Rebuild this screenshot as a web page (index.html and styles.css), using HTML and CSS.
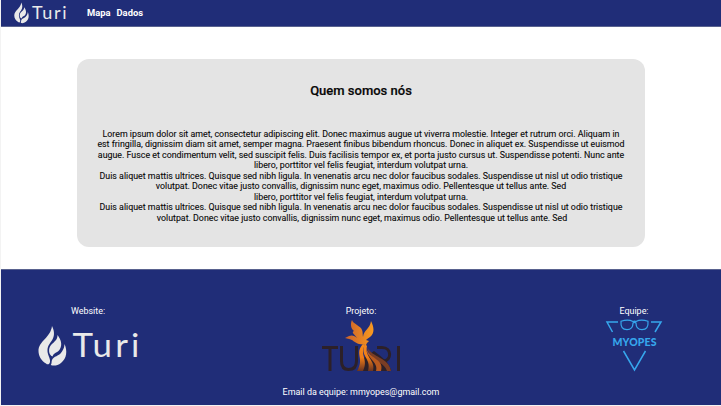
FILE: index.html
```html
<!DOCTYPE html>
<html lang="pt-BR">
<head>
<meta charset="utf-8">
<title>Turi</title>
<link rel="stylesheet" href="styles.css">
</head>
<body>
<svg width="0" height="0" class="defs">
  <symbol id="turi" viewBox="0 0 104 42">
    <g fill="#e9e9e9">
      <path d="M14 1C17 7 16.500 12 13.500 16C10.500 20 8.500 23 10 29C10.700 32 12.500 34 12 37C11.500 39.500 9.500 40 8 38.500C3.500 36 .5 31 .5 26C.5 16 12.500 13 14 1Z"/>
      <path d="M19.500 10C23 15 24.500 19 22 24C20 28 16 27 14.500 31.500C10.500 30 10 23.500 13 20C16.500 16.500 19.500 15 19.500 10Z"/>
      <path d="M26.500 19C29.500 26 29 33 23 38C19.500 40.800 15.500 41 12.800 40C14 38 13.300 37 14 35C15.500 31 21 31.500 24 26.500C25.500 24 26.500 22 26.500 19Z"/>
    </g>
    <text x="34.500" y="32" textLength="70" lengthAdjust="spacingAndGlyphs" class="turi-text">Turi</text>
  </symbol>
</svg>
<div class="page">
  <header class="navbar">
    <svg class="logo-small" viewBox="0 0 104 42"><use href="#turi"/></svg>
    <nav><a>Mapa</a><a>Dados</a></nav>
  </header>
  <main>
    <section class="card">
      <h1>Quem somos nós</h1>
      <p>Lorem ipsum dolor sit amet, consectetur adipiscing elit. Donec maximus augue ut viverra molestie. Integer et rutrum orci. Aliquam in<br>est fringilla, dignissim diam sit amet, semper magna. Praesent finibus bibendum rhoncus. Donec in aliquet ex. Suspendisse ut euismod<br>augue. Fusce et condimentum velit, sed suscipit felis. Duis facilisis tempor ex, et porta justo cursus ut. Suspendisse potenti. Nunc ante<br>libero, porttitor vel felis feugiat, interdum volutpat urna.<br>Duis aliquet mattis ultrices. Quisque sed nibh ligula. In venenatis arcu nec dolor faucibus sodales. Suspendisse ut nisl ut odio tristique<br>volutpat. Donec vitae justo convallis, dignissim nunc eget, maximus odio. Pellentesque ut tellus ante. Sed<br>libero, porttitor vel felis feugiat, interdum volutpat urna.<br>Duis aliquet mattis ultrices. Quisque sed nibh ligula. In venenatis arcu nec dolor faucibus sodales. Suspendisse ut nisl ut odio tristique<br><span class="last">volutpat. Donec vitae justo convallis, dignissim nunc eget, maximus odio. Pellentesque ut tellus ante. Sed</span></p>
    </section>
  </main>
  <footer>
    <div class="columns">
      <div class="col website"><span>Website:</span>
        <svg class="logo-large" viewBox="0 0 104 42"><use href="#turi"/></svg>
      </div>
      <div class="col projeto"><span>Projeto:</span>
        <svg class="logo-fire" viewBox="0 0 80 54">
          <defs><linearGradient id="fire" x1="0" y1="0" x2="0" y2="1"><stop offset="0" stop-color="#f58a1c"/><stop offset=".5" stop-color="#f07c18"/><stop offset="1" stop-color="#6b3420"/></linearGradient>
          <linearGradient id="bird" x1="0" y1="0" x2="1" y2="0"><stop offset="0" stop-color="#c9602a"/><stop offset="1" stop-color="#f99a20"/></linearGradient></defs>
          <g fill="none" stroke="#2c2028" stroke-width="3">
            <path d="M1 27.500H17M9 27.500V51"/>
            <path d="M20.500 26V41C20.500 47 23 49.500 27.500 49.500C33 49.500 35.500 46 35.500 41V26"/>
            <path d="M56 27.500H61C71 27.500 71 41 62 41M63 41L69 51"/>
            <path d="M77.500 26V51"/>
          </g>
          <path d="M36 51C40 45 43 42 43 38L53 31C62 38 68 42 70 51Z" fill="#2c2028"/>
          <path d="M46 27C51 38 68 37 70 51H66C64 42 49 41 46 27Z" fill="#7a3d24"/>
          <path d="M45 26C46 39 64 38 60 51H55C58 42 45 39 45 26Z" fill="#b95a1f"/>
          <path d="M44 24C38 36 51 38 47 51H52C55 40 43 37 46 26Z" fill="url(#fire)"/>
          <path d="M42 24C33 34 44 38 36 51H42C48 39 38 35 44 25Z" fill="url(#fire)"/>
          <path d="M31 0C32 4 40 6 41 10C42 12 41.500 15 42 17C42.500 10 49 9 50 1C53 7 54 13 49 17C47.500 18 46 19 45 20L48 21L46 23L45 25L38 24C34 23 31 19 28 19L24 18L28 16C31 14.500 34 16 36 18C33 14 30 12 33 11C30 9 29 4 31 0Z" fill="url(#bird)"/>
        </svg>
      </div>
      <div class="col equipe"><span>Equipe:</span>
        <svg class="logo-myopes" viewBox="0 0 58 52">
          <g fill="none" stroke="#36a6ec" stroke-width="1.500">
            <path d="M13 2H2L7.500 12M46 2H56L50 12M18.500 31L29.500 50L40.500 31"/>
            <path d="M16 1.300C20 0 25 0 28 1.500C29 1 30 1 31 1.500C34 0 39 0 43 1.300C43.500 7 41.500 9.700 37 9.700C33 9.700 31 7 31 3C30 2.300 29 2.300 28 3C28 7 26 9.700 22 9.700C17.500 9.700 15.500 7 16 1.300Z" stroke-width="1.200"/>
          </g>
          <text x="7.500" y="25.500" textLength="44" lengthAdjust="spacing" class="myopes-text">MYOPES</text>
        </svg>
      </div>
    </div>
    <p class="email">Email da equipe: mmyopes@gmail.com</p>
  </footer>
</div>
</body>
</html>
```
FILE: styles.css
```css
* { box-sizing: border-box; }
body { margin: 0; background: #f3f3f3; font-family: Roboto, "Liberation Sans", sans-serif; font-size: 8.950px; overflow: hidden; }
svg { display: block; overflow: visible; }
.defs { position: absolute; }
symbol { overflow: visible; }
.page { margin-left: 1px; height: 405px; background: #fff; display: flex; flex-direction: column; }
.navbar { height: 27px; background: #202d78; border-bottom: 1px solid #59628f; display: flex; align-items: center; padding-left: 13px; }
.logo-small { width: 54px; height: 22px; }
nav { display: flex; gap: 6px; margin-left: 19px; color: #fff; font-size: 9.400px; line-height: 12px; font-weight: 700; }
main { height: 242px; padding: 32px 76px 0; display: flex; align-items: flex-start; }
.card { width: 568px; height: 188px; border-radius: 12px; background: #e4e4e4; text-align: center; padding-top: 24px; color: #080808; }
h1 { margin: 0 0 29.500px; font-size: 13px; line-height: 16px; font-weight: 500; -webkit-text-stroke: .2px #080808; }
.card p { margin: 0; line-height: 10.530px; white-space: nowrap; font-size: 8.840px; -webkit-text-stroke: .1px #080808; }
.last { padding-left: 2px; }
footer { height: 136px; background: #202d78; border-top: 1px solid #59628f; color: #fff; padding-top: 35px; }
.columns { display: grid; grid-template-columns: 174px 1fr 174px; height: 81px; }
.col { display: flex; flex-direction: column; align-items: center; line-height: 12px; }
.logo-large { width: 104px; height: 42px; margin: 8px 0 0 3px; }
.logo-fire { width: 80px; height: 54px; margin-top: 3px; }
.logo-myopes { width: 58px; height: 52px; margin-top: 3px; }
.turi-text { font-family: Lato, sans-serif; font-size: 33px; letter-spacing: 3px; fill: #e9e9e9; }
.myopes-text { font-family: Lato, sans-serif; font-size: 10.500px; font-weight: 900; fill: #36a6ec; }
.email { margin: 0; text-align: center; line-height: 12px; }
```
